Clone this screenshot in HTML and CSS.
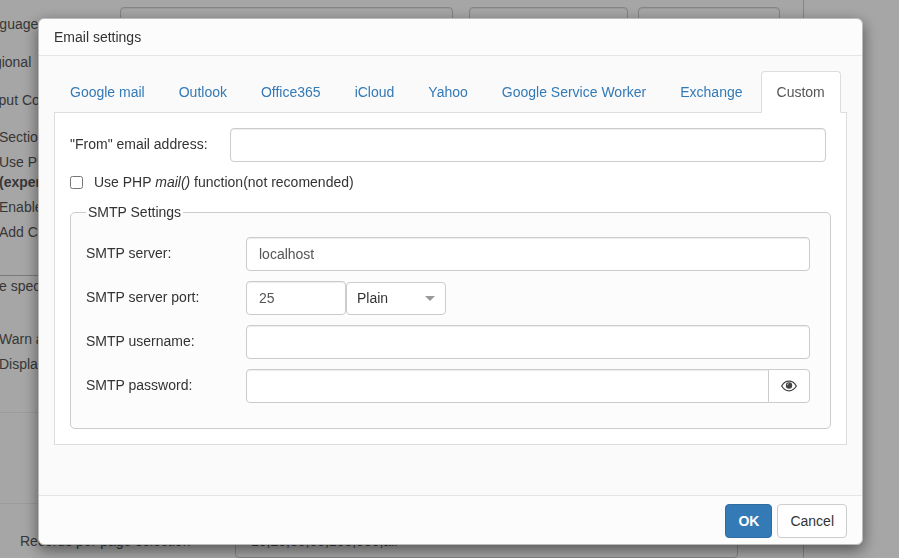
FILE: index.html
```html
<!DOCTYPE html>
<html lang="en">
<head>
    <meta charset="UTF-8">
    <title>Email settings</title>
    <link rel="stylesheet" href="styles.css">
</head>
<body>
    <div class="page">
        <div class="page-row">
            <label for="language">Language</label>
            <input type="text" class="form-control" id="language">
            <input type="text" class="form-control" aria-label="Language code">
            <input type="text" class="form-control" aria-label="Language file">
        </div>
        <div class="page-row">Regional</div>
        <div class="page-row">Output Co</div>
        <ul class="options">
            <li>Sectio</li>
            <li>Use PH<br><b>(exper</b></li>
            <li>Enable</li>
            <li>Add C</li>
        </ul>
        <div class="notes">
            <p>e spec</p>
            <ul class="options">
                <li>Warn a</li>
                <li>Displa</li>
            </ul>
        </div>
        <div class="spacer"></div>
        <div class="records">
            <label for="records">Records per page selection</label>
            <input type="text" class="form-control" id="records" value="10,20,30,50,100,500,all">
        </div>
    </div>

    <div class="overlay">
        <div class="modal" role="dialog" aria-labelledby="modal-title">
            <div class="modal-header" id="modal-title">Email settings</div>
            <div class="modal-body">
                <ul class="nav-tabs">
                    <li><a href="#google">Google mail</a></li>
                    <li><a href="#outlook">Outlook</a></li>
                    <li><a href="#office365">Office365</a></li>
                    <li><a href="#icloud">iCloud</a></li>
                    <li><a href="#yahoo">Yahoo</a></li>
                    <li><a href="#worker">Google Service Worker</a></li>
                    <li><a href="#exchange">Exchange</a></li>
                    <li class="active"><a href="#custom">Custom</a></li>
                </ul>
                <form class="tab-content" id="custom">
                    <div class="form-row">
                        <label for="from">"From" email address:</label>
                        <input type="text" class="form-control" id="from">
                    </div>
                    <div class="checkbox">
                        <input type="checkbox" id="php-mail">
                        <label for="php-mail">Use PHP <i>mail()</i> function(not recomended)</label>
                    </div>
                    <fieldset>
                        <legend>SMTP Settings</legend>
                        <div class="form-row">
                            <label for="server">SMTP server:</label>
                            <input type="text" class="form-control" id="server" value="localhost">
                        </div>
                        <div class="form-row">
                            <label for="port">SMTP server port:</label>
                            <div class="port-group">
                                <input type="text" class="form-control" id="port" value="25">
                                <div class="select">
                                    <select aria-label="Security">
                                        <option>Plain</option>
                                        <option>SSL</option>
                                        <option>TLS</option>
                                    </select>
                                </div>
                            </div>
                        </div>
                        <div class="form-row">
                            <label for="username">SMTP username:</label>
                            <input type="text" class="form-control" id="username">
                        </div>
                        <div class="form-row">
                            <label for="password">SMTP password:</label>
                            <div class="input-group">
                                <input type="password" class="form-control" id="password">
                                <button type="button" class="eye" aria-label="Show password">
                                    <svg width="16" height="12" viewBox="0 0 16 12">
                                        <path d="M.7 6C2.400 2.900 5 1.200 8 1.200S13.600 2.900 15.300 6C13.600 9.100 11 10.800 8 10.800S2.400 9.100.7 6z" fill="none" stroke="#444" stroke-width="1.300"/>
                                        <circle cx="8" cy="5.500" r="3.200" fill="#444"/>
                                        <path d="M6.300 5.300C6.300 4.300 7 3.700 8 3.600" fill="none" stroke="#fff" stroke-width=".6"/>
                                    </svg>
                                </button>
                            </div>
                        </div>
                    </fieldset>
                </form>
            </div>
            <div class="modal-footer">
                <button type="button" class="btn btn-primary">OK</button>
                <button type="button" class="btn">Cancel</button>
            </div>
        </div>
    </div>
</body>
</html>
```
FILE: styles.css
```css
*{
    box-sizing: border-box;
}
body{
    margin: 0;
    overflow: hidden;
    background: #fff;
    color: #333;
    font: 14px/20px "Liberation Sans", Arial, sans-serif;
}
ul{
    list-style: none;
    margin: 0;
    padding: 0;
}
input, select, button{
    font: inherit;
}
.form-control{
    width: 100%;
    min-width: 0;
    height: 34px;
    padding: 6px 12px;
    border: 1px solid #ccc;
    border-radius: 4px;
    background: #fff;
    color: #555;
    box-shadow: inset 0 1px 1px rgba(0,0,0,.075);
}

/* settings page under the dialog */
.page{
    margin: 0 95px 0 -24px;
    padding-top: 7px;
    border-right: 1px solid #ccc;
    color: #555;
}
.page-row{
    display: grid;
    grid-template-columns: 128px 333px 159px 142px;
    column-gap: 16px;
    align-items: center;
    height: 34px;
    margin-bottom: 4px;
}
.page-row input:nth-of-type(3){
    margin-left: -6px;
}
.page .options{
    padding: 6px 0 28px 23px;
}
.page .options li{
    margin-bottom: 5px;
}
.notes{
    border-top: 1px solid #bbb;
    border-bottom: 1px solid #eee;
}
.notes p{
    margin: 0 0 27px 23px;
}
.notes .options{
    padding-bottom: 33px;
}
.spacer{
    height: 91px;
    border-bottom: 1px solid #eee;
}
.records{
    display: grid;
    grid-template-columns: 215px 1fr;
    align-items: center;
    padding: 20px 65px 20px 44px;
}
.records .form-control{
    padding: 6px 15px;
}

/* dialog */
.overlay{
    position: fixed;
    inset: 0;
    padding: 18px 36px 13px 38px;
    background: rgba(0,0,0,.35);
}
.modal{
    border: 1px solid #bbb;
    border-radius: 6px;
    background: #fcfcfc;
    box-shadow: 0 5px 15px rgba(0,0,0,.5);
}
.modal-header{
    padding: 8px 15px;
    border-bottom: 1px solid #e5e5e5;
}
.modal-body{
    padding: 15px 15px 50px;
    background: #fafafa;
}
.nav-tabs{
    display: flex;
    border-bottom: 1px solid #ddd;
}
.nav-tabs li{
    margin: 0 2px -1px 0;
}
.nav-tabs a{
    display: block;
    padding: 10px 15px;
    border: 1px solid transparent;
    border-radius: 4px 4px 0 0;
    color: #337ab7;
    text-decoration: none;
    white-space: nowrap;
}
.nav-tabs .active a{
    border-color: #ddd #ddd #fff;
    background: #fff;
    color: #555;
}
.tab-content{
    padding: 15px;
    border: 1px solid #ddd;
    border-top: 0;
    background: #fff;
}
.form-row{
    display: grid;
    grid-template-columns: 160px 1fr;
    align-items: center;
    margin-bottom: 10px;
    padding-right: 5px;
}
.form-row label{
    padding-bottom: 2px;
}
.checkbox{
    display: flex;
    align-items: center;
    gap: 11px;
    margin-bottom: 10px;
}
.checkbox input{
    width: 13px;
    height: 13px;
    margin: 0;
}
fieldset{
    min-width: 0;
    margin: 0;
    padding: 15px;
    border: 1px solid #ccc;
    border-radius: 5px;
    background: #fcfcfc;
}
legend{
    padding: 0 2px;
}
.port-group{
    display: flex;
    align-items: flex-end;
}
.port-group .form-control{
    width: 100px;
}
.select{
    position: relative;
}
.select select{
    appearance: none;
    display: block;
    width: 100px;
    height: 33px;
    padding: 0 10px 2px;
    border: 1px solid #ccc;
    border-radius: 4px;
    background: #fff;
    color: #333;
}
.select::after{
    content: "";
    position: absolute;
    right: 11px;
    top: 14px;
    border: 5px solid transparent;
    border-top-color: #999;
    border-bottom: 0;
    pointer-events: none;
}
.input-group{
    display: flex;
}
.input-group .form-control{
    flex: 1;
    border-radius: 4px 0 0 4px;
}
.eye{
    display: flex;
    align-items: center;
    justify-content: center;
    width: 42px;
    margin-left: -1px;
    padding: 0;
    border: 1px solid #ccc;
    border-radius: 0 4px 4px 0;
    background: #fff;
}
.modal-footer{
    display: flex;
    justify-content: flex-end;
    gap: 5px;
    padding: 8px 15px 6px;
    border-top: 1px solid #e5e5e5;
}
.btn{
    padding: 6px 12px;
    border: 1px solid #ccc;
    border-radius: 4px;
    background: #fff;
    color: #333;
}
.btn-primary{
    border-color: #2e6da4;
    background: #337ab7;
    color: #fff;
    font-weight: bold;
}
```
